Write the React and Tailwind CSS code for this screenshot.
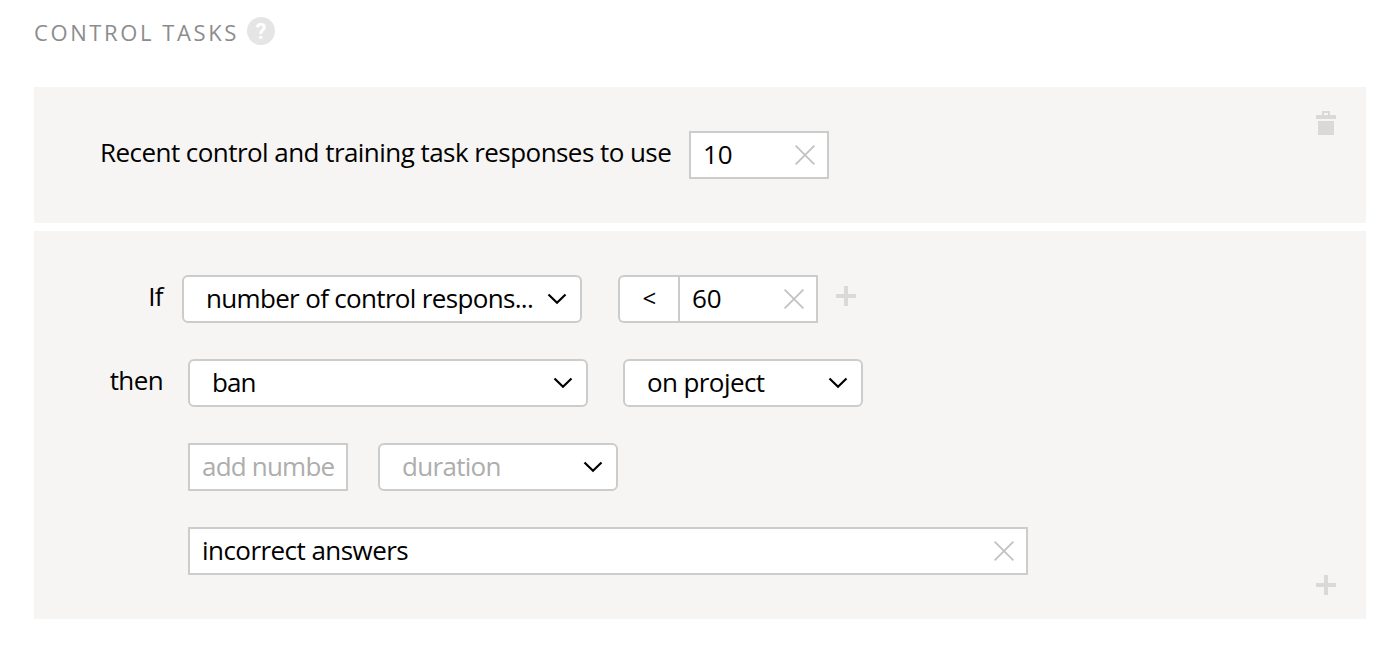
const Cross = () => (
  <svg className="h-5 w-5 shrink-0" viewBox="0 0 20 20" fill="none" stroke="#c2c2c2" strokeWidth="1.8">
    <path d="M0.6 0.6 19.4 19.4M19.4 0.6 0.6 19.4" />
  </svg>
);

const Chevron = () => (
  <svg className="h-3 w-5 shrink-0" viewBox="0 0 20 12" fill="none" stroke="#000" strokeWidth="2.2">
    <path d="M1.5 1.5 10 9.8 18.5 1.5" />
  </svg>
);

const Plus = () => (
  <svg className="h-5 w-5" viewBox="0 0 20 20" fill="#d9d9d9">
    <path d="M8 0h4v8h8v4h-8v8H8v-8H0V8h8z" />
  </svg>
);

const Trash = () => (
  <svg className="h-6 w-5" viewBox="0 0 20 24" fill="#d9d9d9" shapeRendering="crispEdges">
    <path d="M6 0h8v4h6v4H0V4h6zM8 2v2h4V2zM2 10h16v14H2z" fillRule="evenodd" />
  </svg>
);

function Select({ className, children }) {
  return (
    <button className={`flex h-12 items-center justify-between rounded-md border-2 border-[#cccccc] bg-white pr-[13px] pl-[22px] ${className}`}>
      <span className="pb-0.5 whitespace-nowrap">{children}</span>
      <Chevron />
    </button>
  );
}

function Field({ className, clearable = true, children }) {
  return (
    <div className={`flex h-12 items-center justify-between border-2 border-[#cccccc] bg-white pr-3 pl-3 ${className}`}>
      <span className="pb-0.5 whitespace-nowrap">{children}</span>
      {clearable && <Cross />}
    </div>
  );
}

const Label = ({ children }) => <span className="w-16 pr-px pb-1.5 text-right">{children}</span>;

export default function App() {
  return (
    <main className="h-[666px] bg-white px-[34px] pt-[17px] font-['Open_Sans',sans-serif] text-[26px] leading-9 tracking-[-0.6px] text-black">
      <header className="flex h-7 items-center">
        <h1 className="w-[213px] pt-0.5 text-[22px] tracking-[2.6px] whitespace-nowrap text-[#8c8c8c]">CONTROL TASKS</h1>
        <span className="flex h-7 w-7 items-center justify-center rounded-full bg-[#e5e5e5] pt-px font-['Roboto',sans-serif] text-[22px] leading-7 font-bold tracking-normal text-white">?</span>
      </header>

      <section className="mt-[42px] flex h-[136px] justify-between bg-[#f6f5f3] pt-6 pr-[30px] pl-[66px]">
        <div className="mt-5 flex h-12 items-center self-start">
          <span className="w-[589px] pb-1.5 tracking-[-0.55px] whitespace-nowrap">Recent control and training task responses to use</span>
          <Field className="w-[140px] tracking-normal">10</Field>
        </div>
        <Trash />
      </section>

      <section className="mt-2 flex h-[388px] justify-between bg-[#f6f5f3] pr-[30px] pb-6 pl-[66px]">
        <div className="flex flex-col gap-9 pt-11">
          <div className="flex h-12 items-center">
            <Label>If</Label>
            <Select className="ml-[18px] w-[400px] tracking-[-0.67px]">number of control respons...</Select>
            <button className="ml-9 h-12 w-[60px] rounded-l-md border-2 border-r-0 border-[#cccccc] bg-white pb-0.5 text-[24px] font-medium">&lt;</button>
            <Field className="w-[140px] tracking-normal">60</Field>
            <span className="ml-[18px] pb-1.5"><Plus /></span>
          </div>
          <div className="flex h-12 items-center">
            <Label>then</Label>
            <Select className="ml-6 w-[400px] tracking-[-0.9px]">ban</Select>
            <Select className="ml-[35px] w-60">on project</Select>
          </div>
          <div className="flex h-12 items-center pl-[88px] text-[#adadad]">
            <Field className="w-40 tracking-[-0.8px]" clearable={false}>add numbe</Field>
            <Select className="ml-[30px] w-60 tracking-[-0.7px]">duration</Select>
          </div>
          <div className="flex h-12 items-center pl-[88px]">
            <Field className="w-[840px] tracking-[-0.55px]">incorrect answers</Field>
          </div>
        </div>
        <span className="self-end"><Plus /></span>
      </section>
    </main>
  );
}
